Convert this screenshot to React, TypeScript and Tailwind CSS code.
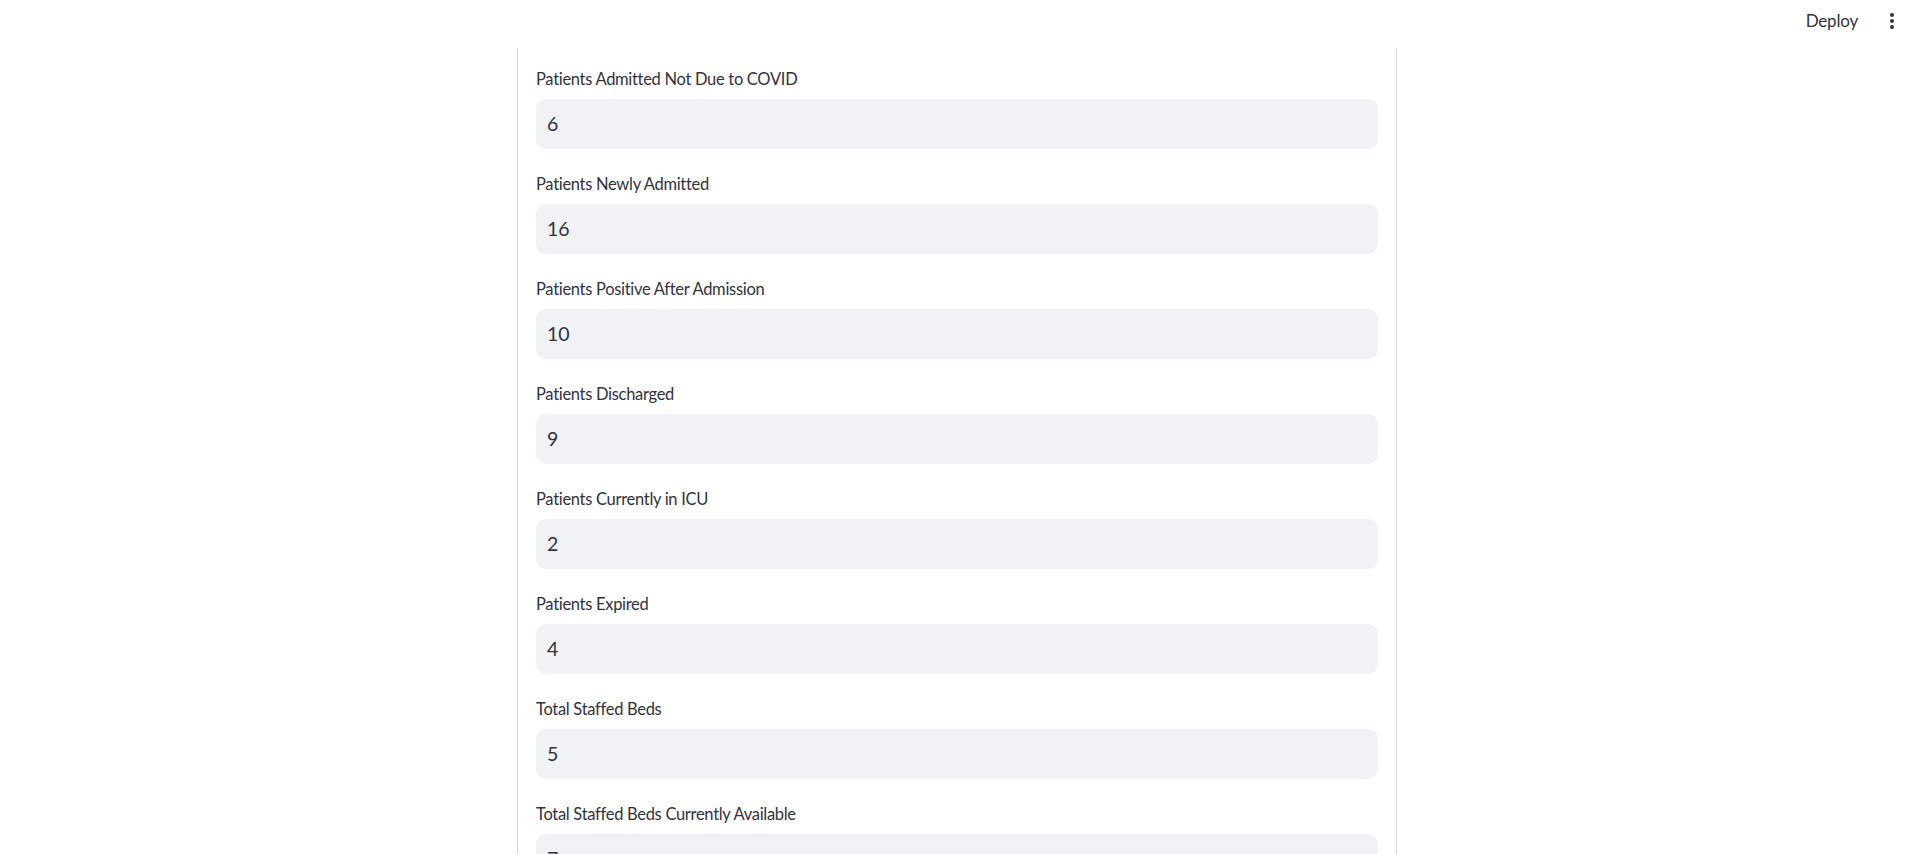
import React from "react";

const fields: [string, string][] = [
  ["Patients Admitted Not Due to COVID", "6"],
  ["Patients Newly Admitted", "16"],
  ["Patients Positive After Admission", "10"],
  ["Patients Discharged", "9"],
  ["Patients Currently in ICU", "2"],
  ["Patients Expired", "4"],
  ["Total Staffed Beds", "5"],
  ["Total Staffed Beds Currently Available", "7"],
];

export default function App() {
  return (
    <div
      className="w-[1920px] h-[854px] overflow-hidden bg-white text-[#31333f]"
      style={{ fontFamily: '"Source Sans Pro", "Lato", "Noto Sans", sans-serif' }}
    >
      <div className="h-[48px] flex items-center justify-end pb-[7px]">
        <span className="text-[17px] tracking-[-0.2px] mr-[32px]">Deploy</span>
        <div className="flex flex-col items-center gap-[2px] mr-[26px]">
          <span className="w-[4px] h-[4px] rounded-full bg-[#31333f]" />
          <span className="w-[4px] h-[4px] rounded-full bg-[#31333f]" />
          <span className="w-[4px] h-[4px] rounded-full bg-[#31333f]" />
        </div>
      </div>
      <div className="flex justify-center pr-[6px]">
        <div className="w-[880px] border-x border-[#d6d6d9] px-[18px] pt-[16px] flex flex-col gap-[20px] h-[900px]">
          {fields.map(([label, value]) => (
            <div key={label} className="flex flex-col">
              <label className="h-[30px] flex items-center text-[16.5px] tracking-[-0.3px] mb-[5px]">{label}</label>
              <div className="h-[50px] rounded-[10px] bg-[#f0f2f6] flex items-center pl-[11px] text-[19.5px]">
                {value}
              </div>
            </div>
          ))}
        </div>
      </div>
    </div>
  );
}
